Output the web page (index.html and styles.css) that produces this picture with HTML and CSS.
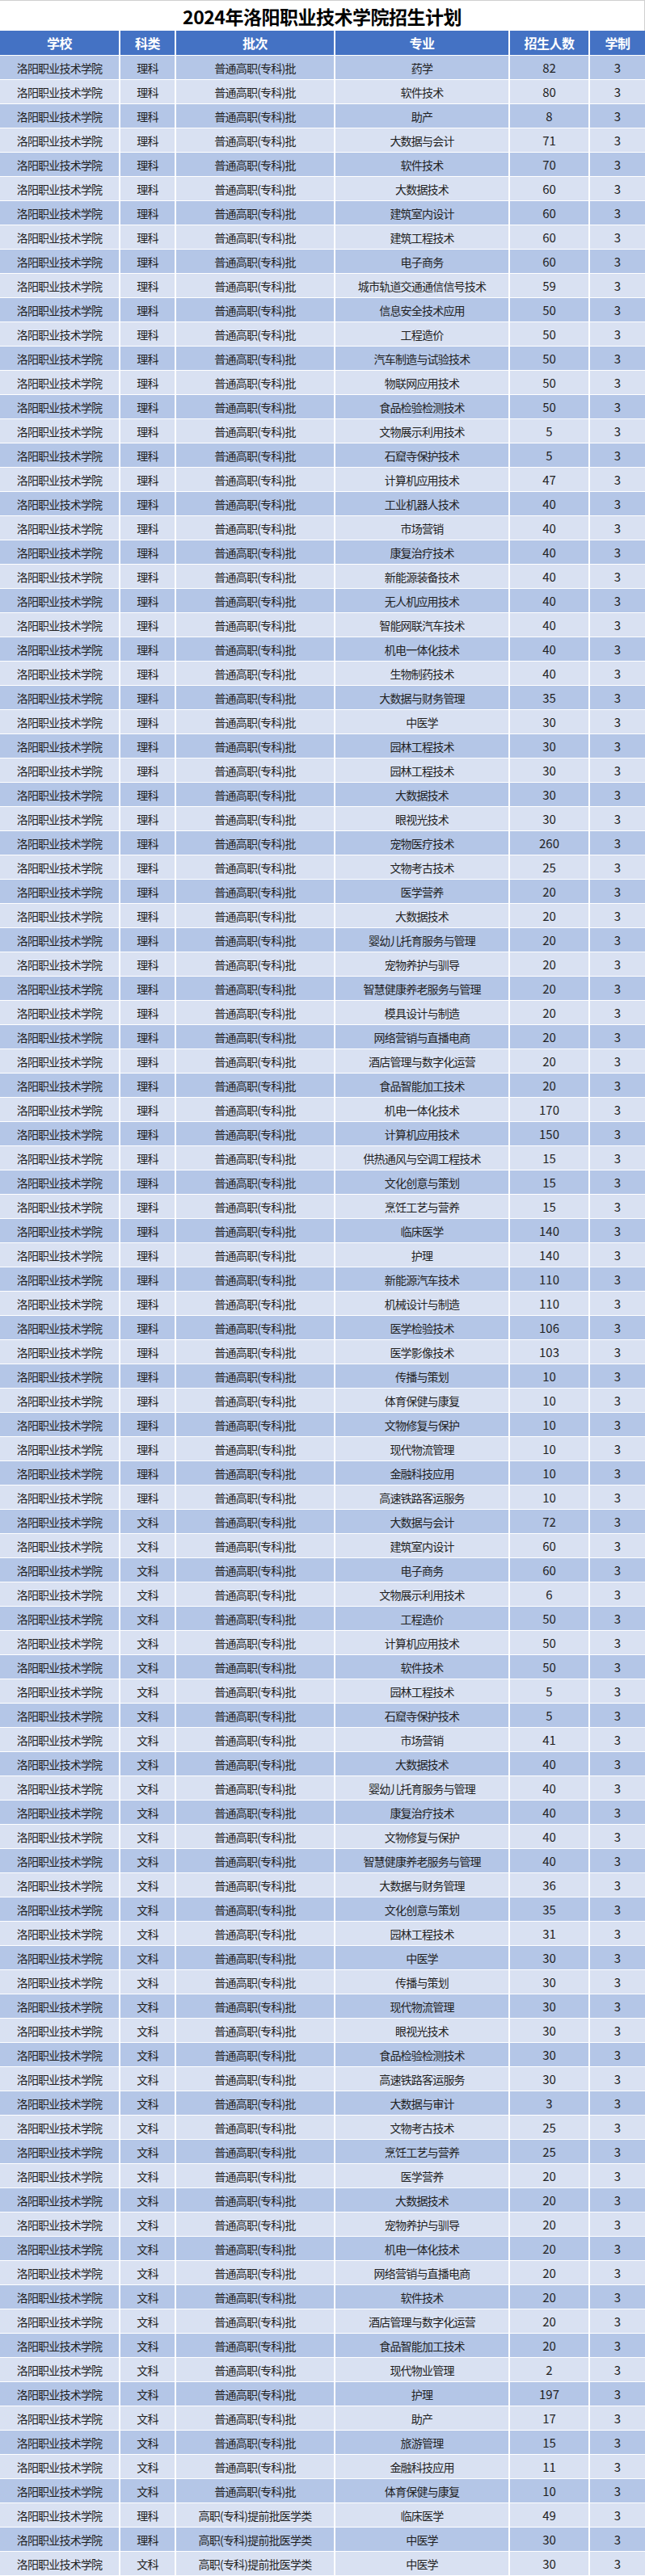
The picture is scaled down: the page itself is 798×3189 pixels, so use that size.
FILE: index.html
```html
<!DOCTYPE html>
<html lang="zh-CN">
<head>
<meta charset="utf-8">
<title>2024年洛阳职业技术学院招生计划</title>
<link rel="stylesheet" href="styles.css">
</head>
<body>
<div class="sheet">
  <div class="title">2024年洛阳职业技术学院招生计划</div>
  <div class="row head"><span>学校</span><span>科类</span><span>批次</span><span>专业</span><span>招生人数</span><span>学制</span></div>
  <div class="body">
    <div class="row"><span>洛阳职业技术学院</span><span>理科</span><span>普通高职(专科)批</span><span>药学</span><span class="n">82</span><span class="n">3</span></div>
    <div class="row"><span>洛阳职业技术学院</span><span>理科</span><span>普通高职(专科)批</span><span>软件技术</span><span class="n">80</span><span class="n">3</span></div>
    <div class="row"><span>洛阳职业技术学院</span><span>理科</span><span>普通高职(专科)批</span><span>助产</span><span class="n">8</span><span class="n">3</span></div>
    <div class="row"><span>洛阳职业技术学院</span><span>理科</span><span>普通高职(专科)批</span><span>大数据与会计</span><span class="n">71</span><span class="n">3</span></div>
    <div class="row"><span>洛阳职业技术学院</span><span>理科</span><span>普通高职(专科)批</span><span>软件技术</span><span class="n">70</span><span class="n">3</span></div>
    <div class="row"><span>洛阳职业技术学院</span><span>理科</span><span>普通高职(专科)批</span><span>大数据技术</span><span class="n">60</span><span class="n">3</span></div>
    <div class="row"><span>洛阳职业技术学院</span><span>理科</span><span>普通高职(专科)批</span><span>建筑室内设计</span><span class="n">60</span><span class="n">3</span></div>
    <div class="row"><span>洛阳职业技术学院</span><span>理科</span><span>普通高职(专科)批</span><span>建筑工程技术</span><span class="n">60</span><span class="n">3</span></div>
    <div class="row"><span>洛阳职业技术学院</span><span>理科</span><span>普通高职(专科)批</span><span>电子商务</span><span class="n">60</span><span class="n">3</span></div>
    <div class="row"><span>洛阳职业技术学院</span><span>理科</span><span>普通高职(专科)批</span><span>城市轨道交通通信信号技术</span><span class="n">59</span><span class="n">3</span></div>
    <div class="row"><span>洛阳职业技术学院</span><span>理科</span><span>普通高职(专科)批</span><span>信息安全技术应用</span><span class="n">50</span><span class="n">3</span></div>
    <div class="row"><span>洛阳职业技术学院</span><span>理科</span><span>普通高职(专科)批</span><span>工程造价</span><span class="n">50</span><span class="n">3</span></div>
    <div class="row"><span>洛阳职业技术学院</span><span>理科</span><span>普通高职(专科)批</span><span>汽车制造与试验技术</span><span class="n">50</span><span class="n">3</span></div>
    <div class="row"><span>洛阳职业技术学院</span><span>理科</span><span>普通高职(专科)批</span><span>物联网应用技术</span><span class="n">50</span><span class="n">3</span></div>
    <div class="row"><span>洛阳职业技术学院</span><span>理科</span><span>普通高职(专科)批</span><span>食品检验检测技术</span><span class="n">50</span><span class="n">3</span></div>
    <div class="row"><span>洛阳职业技术学院</span><span>理科</span><span>普通高职(专科)批</span><span>文物展示利用技术</span><span class="n">5</span><span class="n">3</span></div>
    <div class="row"><span>洛阳职业技术学院</span><span>理科</span><span>普通高职(专科)批</span><span>石窟寺保护技术</span><span class="n">5</span><span class="n">3</span></div>
    <div class="row"><span>洛阳职业技术学院</span><span>理科</span><span>普通高职(专科)批</span><span>计算机应用技术</span><span class="n">47</span><span class="n">3</span></div>
    <div class="row"><span>洛阳职业技术学院</span><span>理科</span><span>普通高职(专科)批</span><span>工业机器人技术</span><span class="n">40</span><span class="n">3</span></div>
    <div class="row"><span>洛阳职业技术学院</span><span>理科</span><span>普通高职(专科)批</span><span>市场营销</span><span class="n">40</span><span class="n">3</span></div>
    <div class="row"><span>洛阳职业技术学院</span><span>理科</span><span>普通高职(专科)批</span><span>康复治疗技术</span><span class="n">40</span><span class="n">3</span></div>
    <div class="row"><span>洛阳职业技术学院</span><span>理科</span><span>普通高职(专科)批</span><span>新能源装备技术</span><span class="n">40</span><span class="n">3</span></div>
    <div class="row"><span>洛阳职业技术学院</span><span>理科</span><span>普通高职(专科)批</span><span>无人机应用技术</span><span class="n">40</span><span class="n">3</span></div>
    <div class="row"><span>洛阳职业技术学院</span><span>理科</span><span>普通高职(专科)批</span><span>智能网联汽车技术</span><span class="n">40</span><span class="n">3</span></div>
    <div class="row"><span>洛阳职业技术学院</span><span>理科</span><span>普通高职(专科)批</span><span>机电一体化技术</span><span class="n">40</span><span class="n">3</span></div>
    <div class="row"><span>洛阳职业技术学院</span><span>理科</span><span>普通高职(专科)批</span><span>生物制药技术</span><span class="n">40</span><span class="n">3</span></div>
    <div class="row"><span>洛阳职业技术学院</span><span>理科</span><span>普通高职(专科)批</span><span>大数据与财务管理</span><span class="n">35</span><span class="n">3</span></div>
    <div class="row"><span>洛阳职业技术学院</span><span>理科</span><span>普通高职(专科)批</span><span>中医学</span><span class="n">30</span><span class="n">3</span></div>
    <div class="row"><span>洛阳职业技术学院</span><span>理科</span><span>普通高职(专科)批</span><span>园林工程技术</span><span class="n">30</span><span class="n">3</span></div>
    <div class="row"><span>洛阳职业技术学院</span><span>理科</span><span>普通高职(专科)批</span><span>园林工程技术</span><span class="n">30</span><span class="n">3</span></div>
    <div class="row"><span>洛阳职业技术学院</span><span>理科</span><span>普通高职(专科)批</span><span>大数据技术</span><span class="n">30</span><span class="n">3</span></div>
    <div class="row"><span>洛阳职业技术学院</span><span>理科</span><span>普通高职(专科)批</span><span>眼视光技术</span><span class="n">30</span><span class="n">3</span></div>
    <div class="row"><span>洛阳职业技术学院</span><span>理科</span><span>普通高职(专科)批</span><span>宠物医疗技术</span><span class="n">260</span><span class="n">3</span></div>
    <div class="row"><span>洛阳职业技术学院</span><span>理科</span><span>普通高职(专科)批</span><span>文物考古技术</span><span class="n">25</span><span class="n">3</span></div>
    <div class="row"><span>洛阳职业技术学院</span><span>理科</span><span>普通高职(专科)批</span><span>医学营养</span><span class="n">20</span><span class="n">3</span></div>
    <div class="row"><span>洛阳职业技术学院</span><span>理科</span><span>普通高职(专科)批</span><span>大数据技术</span><span class="n">20</span><span class="n">3</span></div>
    <div class="row"><span>洛阳职业技术学院</span><span>理科</span><span>普通高职(专科)批</span><span>婴幼儿托育服务与管理</span><span class="n">20</span><span class="n">3</span></div>
    <div class="row"><span>洛阳职业技术学院</span><span>理科</span><span>普通高职(专科)批</span><span>宠物养护与驯导</span><span class="n">20</span><span class="n">3</span></div>
    <div class="row"><span>洛阳职业技术学院</span><span>理科</span><span>普通高职(专科)批</span><span>智慧健康养老服务与管理</span><span class="n">20</span><span class="n">3</span></div>
    <div class="row"><span>洛阳职业技术学院</span><span>理科</span><span>普通高职(专科)批</span><span>模具设计与制造</span><span class="n">20</span><span class="n">3</span></div>
    <div class="row"><span>洛阳职业技术学院</span><span>理科</span><span>普通高职(专科)批</span><span>网络营销与直播电商</span><span class="n">20</span><span class="n">3</span></div>
    <div class="row"><span>洛阳职业技术学院</span><span>理科</span><span>普通高职(专科)批</span><span>酒店管理与数字化运营</span><span class="n">20</span><span class="n">3</span></div>
    <div class="row"><span>洛阳职业技术学院</span><span>理科</span><span>普通高职(专科)批</span><span>食品智能加工技术</span><span class="n">20</span><span class="n">3</span></div>
    <div class="row"><span>洛阳职业技术学院</span><span>理科</span><span>普通高职(专科)批</span><span>机电一体化技术</span><span class="n">170</span><span class="n">3</span></div>
    <div class="row"><span>洛阳职业技术学院</span><span>理科</span><span>普通高职(专科)批</span><span>计算机应用技术</span><span class="n">150</span><span class="n">3</span></div>
    <div class="row"><span>洛阳职业技术学院</span><span>理科</span><span>普通高职(专科)批</span><span>供热通风与空调工程技术</span><span class="n">15</span><span class="n">3</span></div>
    <div class="row"><span>洛阳职业技术学院</span><span>理科</span><span>普通高职(专科)批</span><span>文化创意与策划</span><span class="n">15</span><span class="n">3</span></div>
    <div class="row"><span>洛阳职业技术学院</span><span>理科</span><span>普通高职(专科)批</span><span>烹饪工艺与营养</span><span class="n">15</span><span class="n">3</span></div>
    <div class="row"><span>洛阳职业技术学院</span><span>理科</span><span>普通高职(专科)批</span><span>临床医学</span><span class="n">140</span><span class="n">3</span></div>
    <div class="row"><span>洛阳职业技术学院</span><span>理科</span><span>普通高职(专科)批</span><span>护理</span><span class="n">140</span><span class="n">3</span></div>
    <div class="row"><span>洛阳职业技术学院</span><span>理科</span><span>普通高职(专科)批</span><span>新能源汽车技术</span><span class="n">110</span><span class="n">3</span></div>
    <div class="row"><span>洛阳职业技术学院</span><span>理科</span><span>普通高职(专科)批</span><span>机械设计与制造</span><span class="n">110</span><span class="n">3</span></div>
    <div class="row"><span>洛阳职业技术学院</span><span>理科</span><span>普通高职(专科)批</span><span>医学检验技术</span><span class="n">106</span><span class="n">3</span></div>
    <div class="row"><span>洛阳职业技术学院</span><span>理科</span><span>普通高职(专科)批</span><span>医学影像技术</span><span class="n">103</span><span class="n">3</span></div>
    <div class="row"><span>洛阳职业技术学院</span><span>理科</span><span>普通高职(专科)批</span><span>传播与策划</span><span class="n">10</span><span class="n">3</span></div>
    <div class="row"><span>洛阳职业技术学院</span><span>理科</span><span>普通高职(专科)批</span><span>体育保健与康复</span><span class="n">10</span><span class="n">3</span></div>
    <div class="row"><span>洛阳职业技术学院</span><span>理科</span><span>普通高职(专科)批</span><span>文物修复与保护</span><span class="n">10</span><span class="n">3</span></div>
    <div class="row"><span>洛阳职业技术学院</span><span>理科</span><span>普通高职(专科)批</span><span>现代物流管理</span><span class="n">10</span><span class="n">3</span></div>
    <div class="row"><span>洛阳职业技术学院</span><span>理科</span><span>普通高职(专科)批</span><span>金融科技应用</span><span class="n">10</span><span class="n">3</span></div>
    <div class="row"><span>洛阳职业技术学院</span><span>理科</span><span>普通高职(专科)批</span><span>高速铁路客运服务</span><span class="n">10</span><span class="n">3</span></div>
    <div class="row"><span>洛阳职业技术学院</span><span>文科</span><span>普通高职(专科)批</span><span>大数据与会计</span><span class="n">72</span><span class="n">3</span></div>
    <div class="row"><span>洛阳职业技术学院</span><span>文科</span><span>普通高职(专科)批</span><span>建筑室内设计</span><span class="n">60</span><span class="n">3</span></div>
    <div class="row"><span>洛阳职业技术学院</span><span>文科</span><span>普通高职(专科)批</span><span>电子商务</span><span class="n">60</span><span class="n">3</span></div>
    <div class="row"><span>洛阳职业技术学院</span><span>文科</span><span>普通高职(专科)批</span><span>文物展示利用技术</span><span class="n">6</span><span class="n">3</span></div>
    <div class="row"><span>洛阳职业技术学院</span><span>文科</span><span>普通高职(专科)批</span><span>工程造价</span><span class="n">50</span><span class="n">3</span></div>
    <div class="row"><span>洛阳职业技术学院</span><span>文科</span><span>普通高职(专科)批</span><span>计算机应用技术</span><span class="n">50</span><span class="n">3</span></div>
    <div class="row"><span>洛阳职业技术学院</span><span>文科</span><span>普通高职(专科)批</span><span>软件技术</span><span class="n">50</span><span class="n">3</span></div>
    <div class="row"><span>洛阳职业技术学院</span><span>文科</span><span>普通高职(专科)批</span><span>园林工程技术</span><span class="n">5</span><span class="n">3</span></div>
    <div class="row"><span>洛阳职业技术学院</span><span>文科</span><span>普通高职(专科)批</span><span>石窟寺保护技术</span><span class="n">5</span><span class="n">3</span></div>
    <div class="row"><span>洛阳职业技术学院</span><span>文科</span><span>普通高职(专科)批</span><span>市场营销</span><span class="n">41</span><span class="n">3</span></div>
    <div class="row"><span>洛阳职业技术学院</span><span>文科</span><span>普通高职(专科)批</span><span>大数据技术</span><span class="n">40</span><span class="n">3</span></div>
    <div class="row"><span>洛阳职业技术学院</span><span>文科</span><span>普通高职(专科)批</span><span>婴幼儿托育服务与管理</span><span class="n">40</span><span class="n">3</span></div>
    <div class="row"><span>洛阳职业技术学院</span><span>文科</span><span>普通高职(专科)批</span><span>康复治疗技术</span><span class="n">40</span><span class="n">3</span></div>
    <div class="row"><span>洛阳职业技术学院</span><span>文科</span><span>普通高职(专科)批</span><span>文物修复与保护</span><span class="n">40</span><span class="n">3</span></div>
    <div class="row"><span>洛阳职业技术学院</span><span>文科</span><span>普通高职(专科)批</span><span>智慧健康养老服务与管理</span><span class="n">40</span><span class="n">3</span></div>
    <div class="row"><span>洛阳职业技术学院</span><span>文科</span><span>普通高职(专科)批</span><span>大数据与财务管理</span><span class="n">36</span><span class="n">3</span></div>
    <div class="row"><span>洛阳职业技术学院</span><span>文科</span><span>普通高职(专科)批</span><span>文化创意与策划</span><span class="n">35</span><span class="n">3</span></div>
    <div class="row"><span>洛阳职业技术学院</span><span>文科</span><span>普通高职(专科)批</span><span>园林工程技术</span><span class="n">31</span><span class="n">3</span></div>
    <div class="row"><span>洛阳职业技术学院</span><span>文科</span><span>普通高职(专科)批</span><span>中医学</span><span class="n">30</span><span class="n">3</span></div>
    <div class="row"><span>洛阳职业技术学院</span><span>文科</span><span>普通高职(专科)批</span><span>传播与策划</span><span class="n">30</span><span class="n">3</span></div>
    <div class="row"><span>洛阳职业技术学院</span><span>文科</span><span>普通高职(专科)批</span><span>现代物流管理</span><span class="n">30</span><span class="n">3</span></div>
    <div class="row"><span>洛阳职业技术学院</span><span>文科</span><span>普通高职(专科)批</span><span>眼视光技术</span><span class="n">30</span><span class="n">3</span></div>
    <div class="row"><span>洛阳职业技术学院</span><span>文科</span><span>普通高职(专科)批</span><span>食品检验检测技术</span><span class="n">30</span><span class="n">3</span></div>
    <div class="row"><span>洛阳职业技术学院</span><span>文科</span><span>普通高职(专科)批</span><span>高速铁路客运服务</span><span class="n">30</span><span class="n">3</span></div>
    <div class="row"><span>洛阳职业技术学院</span><span>文科</span><span>普通高职(专科)批</span><span>大数据与审计</span><span class="n">3</span><span class="n">3</span></div>
    <div class="row"><span>洛阳职业技术学院</span><span>文科</span><span>普通高职(专科)批</span><span>文物考古技术</span><span class="n">25</span><span class="n">3</span></div>
    <div class="row"><span>洛阳职业技术学院</span><span>文科</span><span>普通高职(专科)批</span><span>烹饪工艺与营养</span><span class="n">25</span><span class="n">3</span></div>
    <div class="row"><span>洛阳职业技术学院</span><span>文科</span><span>普通高职(专科)批</span><span>医学营养</span><span class="n">20</span><span class="n">3</span></div>
    <div class="row"><span>洛阳职业技术学院</span><span>文科</span><span>普通高职(专科)批</span><span>大数据技术</span><span class="n">20</span><span class="n">3</span></div>
    <div class="row"><span>洛阳职业技术学院</span><span>文科</span><span>普通高职(专科)批</span><span>宠物养护与驯导</span><span class="n">20</span><span class="n">3</span></div>
    <div class="row"><span>洛阳职业技术学院</span><span>文科</span><span>普通高职(专科)批</span><span>机电一体化技术</span><span class="n">20</span><span class="n">3</span></div>
    <div class="row"><span>洛阳职业技术学院</span><span>文科</span><span>普通高职(专科)批</span><span>网络营销与直播电商</span><span class="n">20</span><span class="n">3</span></div>
    <div class="row"><span>洛阳职业技术学院</span><span>文科</span><span>普通高职(专科)批</span><span>软件技术</span><span class="n">20</span><span class="n">3</span></div>
    <div class="row"><span>洛阳职业技术学院</span><span>文科</span><span>普通高职(专科)批</span><span>酒店管理与数字化运营</span><span class="n">20</span><span class="n">3</span></div>
    <div class="row"><span>洛阳职业技术学院</span><span>文科</span><span>普通高职(专科)批</span><span>食品智能加工技术</span><span class="n">20</span><span class="n">3</span></div>
    <div class="row"><span>洛阳职业技术学院</span><span>文科</span><span>普通高职(专科)批</span><span>现代物业管理</span><span class="n">2</span><span class="n">3</span></div>
    <div class="row"><span>洛阳职业技术学院</span><span>文科</span><span>普通高职(专科)批</span><span>护理</span><span class="n">197</span><span class="n">3</span></div>
    <div class="row"><span>洛阳职业技术学院</span><span>文科</span><span>普通高职(专科)批</span><span>助产</span><span class="n">17</span><span class="n">3</span></div>
    <div class="row"><span>洛阳职业技术学院</span><span>文科</span><span>普通高职(专科)批</span><span>旅游管理</span><span class="n">15</span><span class="n">3</span></div>
    <div class="row"><span>洛阳职业技术学院</span><span>文科</span><span>普通高职(专科)批</span><span>金融科技应用</span><span class="n">11</span><span class="n">3</span></div>
    <div class="row"><span>洛阳职业技术学院</span><span>文科</span><span>普通高职(专科)批</span><span>体育保健与康复</span><span class="n">10</span><span class="n">3</span></div>
    <div class="row"><span>洛阳职业技术学院</span><span>理科</span><span>高职(专科)提前批医学类</span><span>临床医学</span><span class="n">49</span><span class="n">3</span></div>
    <div class="row"><span>洛阳职业技术学院</span><span>理科</span><span>高职(专科)提前批医学类</span><span>中医学</span><span class="n">30</span><span class="n">3</span></div>
    <div class="row"><span>洛阳职业技术学院</span><span>文科</span><span>高职(专科)提前批医学类</span><span>中医学</span><span class="n">30</span><span class="n">3</span></div>
  </div>
</div>
</body>
</html>
```
FILE: styles.css
```css
html, body {
  margin: 0;
  padding: 0;
  background: #ffffff;
}

.sheet {
  width: 798px;
  font-family: "Noto Sans CJK SC", "Noto Sans", sans-serif;
  color: #1f1f1f;
}

.title {
  height: 38px;
  display: flex;
  align-items: center;
  justify-content: center;
  font-size: 23px;
  font-weight: 700;
  color: #000;
  letter-spacing: -0.5px;
  border-top: 1px solid #d0d0d0;
  border-right: 1px solid #d0d0d0;
  box-sizing: border-box;
}

.row {
  display: grid;
  grid-template-columns: 147px 67px 195px 214px 97px 1fr;
  column-gap: 2px;
  height: 29px;
  margin-bottom: 1px;
}

.row span {
  display: flex;
  align-items: center;
  justify-content: center;
  font-size: 14px;
  letter-spacing: -0.8px;
  white-space: nowrap;
}

.row span.n {
  letter-spacing: 0;
  font-size: 15px;
}

.head {
  height: 30px;
  margin-bottom: 1px;
}

.head span {
  background: #4472c4;
  color: #ffffff;
  font-size: 16px;
  font-weight: 700;
  letter-spacing: -0.5px;
}

.body .row:nth-child(odd) span {
  background: #b4c6e7;
}

.body .row:nth-child(even) span {
  background: #d9e1f2;
}
```
